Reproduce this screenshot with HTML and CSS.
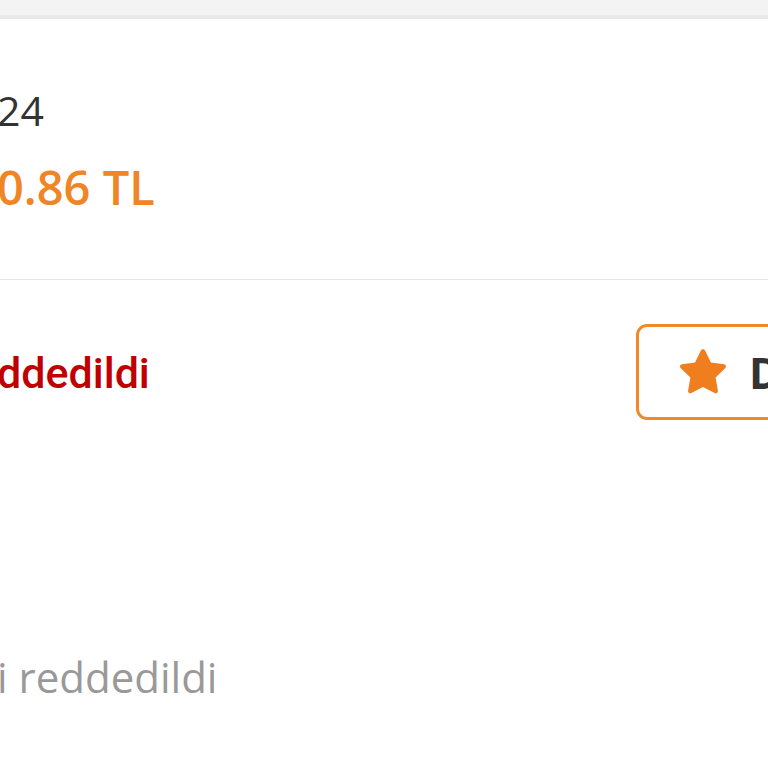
FILE: index.html
```html
<!DOCTYPE html>
<html lang="tr">
<head>
<meta charset="utf-8">
<title>Sipariş</title>
<link rel="stylesheet" href="styles.css">
</head>
<body>
<div class="topbar"></div>
<section class="summary">
  <div class="order-no">24</div>
  <div class="price">0.86 TL</div>
</section>
<section class="status">
  <div class="status-row">
    <div class="status-text">ddedildi</div>
    <button class="rate-btn" type="button">
      <svg class="star" viewBox="0 0 24 24" width="56" height="56" aria-hidden="true">
        <path d="M12 2.2c.4 0 .7.2.9.6l2.5 5.1 5.6.8c.8.1 1.1 1.1.5 1.7l-4.1 4 1 5.6c.1.8-.7 1.4-1.4 1L12 18.4l-5 2.6c-.7.4-1.5-.2-1.4-1l1-5.6-4.1-4c-.6-.6-.3-1.6.5-1.7l5.6-.8 2.5-5.1c.2-.4.5-.6.9-.6z" fill="#f07d1e"/>
      </svg>
      <span class="btn-label">Değerlendir</span>
    </button>
  </div>
  <p class="note">i reddedildi</p>
</section>
</body>
</html>
```

FILE: styles.css
```css
html, body {
  margin: 0;
  padding: 0;
  background: #ffffff;
  overflow: hidden;
}
body {
  font-family: "Open Sans", "Noto Sans", sans-serif;
  width: 768px;
  height: 768px;
}
.topbar {
  height: 15px;
  background: #f3f3f3;
  border-bottom: 4px solid #e9e9e9;
}
.summary {
  padding-top: 63px;
  padding-bottom: 64px;
  border-bottom: 1px solid #e6e6e6;
}
.order-no {
  font-size: 41px;
  line-height: 56px;
  color: #333333;
  margin-left: -3px;
}
.price {
  margin-top: 21px;
  font-size: 47px;
  line-height: 56px;
  font-weight: 600;
  color: #f08526;
  margin-left: -3px;
}
.status {
  padding-top: 44px;
}
.status-row {
  display: flex;
  align-items: center;
  justify-content: space-between;
}
.status-text {
  font-family: Roboto, "Open Sans", sans-serif;
  font-size: 43px;
  line-height: 56px;
  font-weight: 500;
  color: #c00000;
  margin-left: -3px;
  margin-top: 2px;
}
.rate-btn {
  flex: none;
  display: flex;
  align-items: center;
  gap: 18px;
  margin-right: -160px;
  width: 292px;
  height: 96px;
  padding: 0 0 0 36px;
  border: 3px solid #f0892a;
  border-radius: 11px;
  background: #ffffff;
  font-family: inherit;
  cursor: pointer;
  overflow: hidden;
}
.star {
  display: block;
  flex: none;
}
.btn-label {
  flex: none;
  font-size: 43px;
  font-weight: 700;
  color: #333333;
  white-space: nowrap;
}
.note {
  margin: 0;
  margin-top: 229px;
  font-size: 42px;
  line-height: 56px;
  color: #999999;
  margin-left: -3px;
}
```
